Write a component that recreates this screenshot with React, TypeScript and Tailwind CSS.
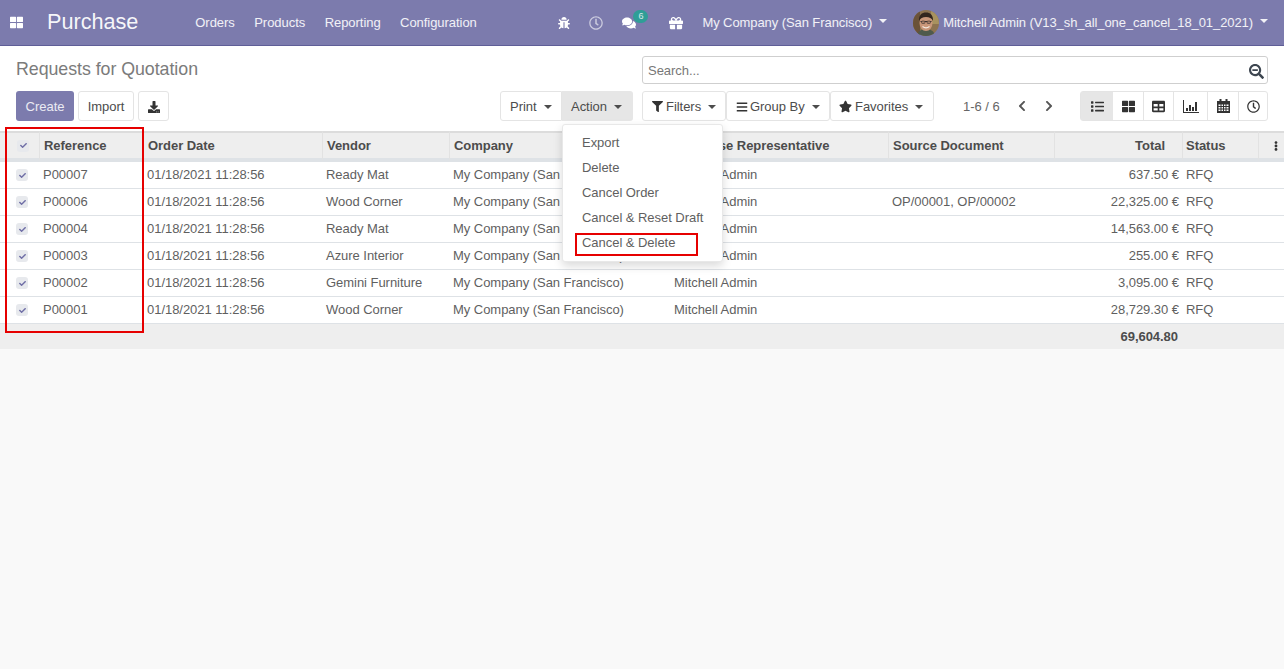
import React from "react";
import {
  FaBug,
  FaRegClock,
  FaComments,
  FaGift,
  FaFilter,
  FaBars,
  FaStar,
  FaList,
  FaTable,
  FaThLarge,
  FaDownload,
  FaSearchMinus,
  FaChevronLeft,
  FaChevronRight,
  FaEllipsisV,
  FaCheck,
} from "react-icons/fa";

const rows = [
  { ref: "P00007", vendor: "Ready Mat", source: "", total: "637.50 €" },
  { ref: "P00006", vendor: "Wood Corner", source: "OP/00001, OP/00002", total: "22,325.00 €" },
  { ref: "P00004", vendor: "Ready Mat", source: "", total: "14,563.00 €" },
  { ref: "P00003", vendor: "Azure Interior", source: "", total: "255.00 €" },
  { ref: "P00002", vendor: "Gemini Furniture", source: "", total: "3,095.00 €" },
  { ref: "P00001", vendor: "Wood Corner", source: "", total: "28,729.30 €" },
];

const Caret = () => (
  <span className="inline-block w-0 h-0 border-x-[4px] border-x-transparent border-t-[4px] border-t-current ml-[7px] align-[4px]" />
);

const Check = () => (
  <span className="ml-[13px] flex items-center justify-center w-3 h-3 rounded-[3px] bg-[#e7e9ed]">
    <FaCheck className="text-[7px] text-[#6f6ea6]" />
  </span>
);

const Avatar = () => (
  <svg width="26" height="26" viewBox="0 0 26 26" className="rounded-full">
    <rect width="26" height="26" fill="#8d7350" />
    <path d="M18 0h8v14h-8z" fill="#a8925f" />
    <path d="M0 0h7v26H0z" fill="#6a5238" />
    <path d="M4 26c1-5 4-7 9-7s8 2 9 7z" fill="#4f5a4c" />
    <ellipse cx="13" cy="13" rx="6.500" ry="8" fill="#c9977a" />
    <path d="M6 11c-.5-6 3-8.500 7-8.500s7.500 2.500 7 8.500c-1.500-3-3.500-4-7-4s-5.500 1-7 4z" fill="#33261e" />
    <path d="M7.500 11.500h11" stroke="#3a3330" strokeWidth="1" />
    <rect x="8.500" y="11" width="3.500" height="2.500" rx="1" fill="#a87f68" stroke="#3a3330" strokeWidth=".6" />
    <rect x="14" y="11" width="3.500" height="2.500" rx="1" fill="#a87f68" stroke="#3a3330" strokeWidth=".6" />
    <path d="M9.500 16.500c2 1.500 5 1.500 7 0" stroke="#f5ebe2" strokeWidth="1.300" fill="none" />
  </svg>
);

const ChartIcon = () => (
  <svg width="16" height="13" viewBox="0 0 16 13" fill="#333">
    <path d="M0 0h1v12h15v1H0z" />
    <path d="M3 8h2v3H3zM6 5h2v6H6zM9 7h2v4H9zM12 2h2v9h-2z" />
  </svg>
);

const CalendarIcon = () => (
  <svg width="13" height="14" viewBox="0 0 13 14" fill="#333">
    <path d="M0 2h2.500V0h2v2h4V0h2v2H13v12H0z" />
    <path
      d="M1.500 5.500h2v1.500h-2zM4.500 5.500h1.500v1.500H4.500zM7 5.500h1.500v1.500H7zM9.500 5.500h2v1.500h-2zM1.500 8h2v1.500h-2zM4.500 8h1.500v1.500H4.500zM7 8h1.500v1.500H7zM9.500 8h2v1.500h-2zM1.500 10.500h2V12h-2zM4.500 10.500h1.500V12H4.500zM7 10.500h1.500V12H7zM9.500 10.500h2V12h-2z"
      fill="#fff"
    />
  </svg>
);

const Navbar = () => (
  <div className="h-[46px] shrink-0 flex items-center bg-[#7c7bad] border-b border-[#5f5e97] text-[13px] text-white/90">
    <FaThLarge className="ml-[10px] text-[13px] text-white" />
    <span className="ml-[24px] text-[21.700px] text-white/95">Purchase</span>
    <div className="ml-[57px] flex gap-[19.500px] tracking-[-0.05px]">
      <span>Orders</span>
      <span>Products</span>
      <span>Reporting</span>
      <span>Configuration</span>
    </div>
    <div className="ml-auto flex items-center tracking-[-0.080px]">
      <FaBug className="text-[12px] text-white" />
      <FaRegClock className="ml-[19px] text-[14px] text-white/60" />
      <span className="relative ml-[19px]">
        <FaComments className="text-[14px] text-white" />
        <span className="absolute -top-[6px] left-[11px] w-[15px] h-[13px] rounded-full bg-[#2f9e97] text-[9px] leading-[13px] text-center text-white/80">
          6
        </span>
      </span>
      <FaGift className="ml-[33px] text-[14px] text-white" />
      <span className="ml-[19px]">
        My Company (San Francisco)
        <Caret />
      </span>
      <span className="ml-[26px]">
        <Avatar />
      </span>
      <span className="ml-[4px] mr-[16px]">
        Mitchell Admin (V13_sh_all_one_cancel_18_01_2021)
        <Caret />
      </span>
    </div>
  </div>
);

const btn =
  "h-[30px] pt-[1px] flex items-center bg-white border border-[#e4e4e4] text-[13px] text-[#4c4c4c]";

const ControlPanel = () => (
  <div className="h-[85px] shrink-0 bg-white px-4 pt-[10px] flex gap-[9px]">
    <div className="flex-1 flex flex-col">
      <div className="h-[35px] text-[17.800px] leading-[26px] text-[#7b7b7b]">
        Requests for Quotation
      </div>
      <div className="flex justify-between">
        <div className="flex gap-1">
          <div className="h-[30px] w-[58px] pt-[1px] rounded-[3px] bg-[#7c7bad] flex items-center justify-center text-[13px] text-white/85">
            Create
          </div>
          <div className={`${btn} w-[56px] justify-center rounded-[3px]`}>Import</div>
          <div className={`${btn} w-[31px] justify-center rounded-[3px]`}>
            <FaDownload className="text-[12px] text-[#333]" />
          </div>
        </div>
        <div className="flex">
          <div className={`${btn} w-[62px] pl-[9px] rounded-l-[3px]`}>
            Print
            <Caret />
          </div>
          <div className="h-[30px] w-[71px] pt-[1px] pl-[9px] flex items-center bg-[#e6e6e6] rounded-r-[3px] text-[13px] text-[#4c4c4c]">
            Action
            <Caret />
          </div>
        </div>
      </div>
    </div>
    <div className="w-[626px] flex flex-col">
      <div className="h-[28px] pt-[2px] flex items-center justify-between rounded-[3px] border border-[#cfcfcf] pl-[5px] pr-[3px] text-[13px] text-[#777]">
        <span>Search...</span>
        <FaSearchMinus className="text-[15px] text-[#3d4650]" />
      </div>
      <div className="mt-[7px] flex items-center">
        <div className="flex">
          <div className={`${btn} w-[84px] pl-[9px] rounded-[3px]`}>
            <FaFilter className="mr-[3px] text-[11px] text-[#333]" />
            Filters
            <Caret />
          </div>
          <div className={`${btn} w-[104px] pl-[9px] rounded-[3px]`}>
            <FaBars className="mr-[2px] text-[12px] text-[#333]" />
            Group By
            <Caret />
          </div>
          <div className={`${btn} w-[104px] pl-[8px] rounded-[3px]`}>
            <FaStar className="mr-[3px] text-[13px] text-[#333]" />
            Favorites
            <Caret />
          </div>
        </div>
        <span className="ml-[29px] pt-[1px] text-[13px] text-[#666]">1-6 / 6</span>
        <FaChevronLeft className="ml-[16px] text-[12px] text-[#555]" />
        <FaChevronRight className="ml-[15px] text-[12px] text-[#555]" />
        <div className="ml-auto flex w-[188px] h-[30px] rounded-[3px] border border-[#e4e4e4] text-[#333]">
          <div className="w-[32px] flex items-center justify-center bg-[#e6e6e6]">
            <FaList className="text-[13px]" />
          </div>
          <div className="w-[31px] flex items-center justify-center border-r border-[#e4e4e4]">
            <FaThLarge className="text-[13px]" />
          </div>
          <div className="w-[30px] flex items-center justify-center border-r border-[#e4e4e4]">
            <FaTable className="text-[13px]" />
          </div>
          <div className="w-[34px] flex items-center justify-center border-r border-[#e4e4e4]">
            <ChartIcon />
          </div>
          <div className="w-[31px] flex items-center justify-center border-r border-[#e4e4e4]">
            <CalendarIcon />
          </div>
          <div className="flex-1 flex items-center justify-center">
            <FaRegClock className="text-[13px]" />
          </div>
        </div>
      </div>
    </div>
  </div>
);

const th =
  "h-[31px] p-0 pl-[4px] font-bold text-left bg-[#eeeeee] border-t-2 border-b-[4px] border-r border-t-[#dcdcdc] border-b-[#dee2e6] border-r-[#e2e2e2]";
const td = "h-[27px] p-0 pl-[3px] font-normal bg-white border-b border-[#dee2e6]";

const Table = () => (
  <table className="w-full table-fixed border-separate border-spacing-0 text-[13px] text-[#5f5f5f]">
    <colgroup>
      <col className="w-[40px]" />
      <col className="w-[104px]" />
      <col className="w-[179px]" />
      <col className="w-[127px]" />
      <col className="w-[221px]" />
      <col className="w-[218px]" />
      <col className="w-[166px]" />
      <col className="w-[128px]" />
      <col className="w-[76px]" />
      <col className="w-[25px]" />
    </colgroup>
    <thead className="text-[#4c4c4c]">
      <tr>
        <th className={th}>
          <Check />
        </th>
        <th className={th}>Reference</th>
        <th className={th}>Order Date</th>
        <th className={th}>Vendor</th>
        <th className={th}>Company</th>
        <th className={th}>Purchase Representative</th>
        <th className={th}>Source Document</th>
        <th className={`${th} text-right pr-[17px]`}>Total</th>
        <th className={`${th} !pl-[3px]`}>Status</th>
        <th className="h-[31px] p-0 pr-[3px] bg-[#eeeeee] border-t-2 border-b-[4px] border-t-[#dcdcdc] border-b-[#dee2e6]">
          <FaEllipsisV className="ml-auto text-[10px] text-[#333]" />
        </th>
      </tr>
    </thead>
    <tbody>
      {rows.map((r) => (
        <tr key={r.ref}>
          <td className={td}>
            <Check />
          </td>
          <td className={td}>{r.ref}</td>
          <td className={td}>01/18/2021 11:28:56</td>
          <td className={td}>{r.vendor}</td>
          <td className={td}>My Company (San Francisco)</td>
          <td className={td}>Mitchell Admin</td>
          <td className={td}>{r.source}</td>
          <td className={`${td} text-right pr-[4px]`}>{r.total}</td>
          <td className={td}>RFQ</td>
          <td className={td} />
        </tr>
      ))}
    </tbody>
    <tfoot>
      <tr className="bg-[#eeeeee]">
        <td className="h-[25px] p-0" colSpan={7} />
        <td className="h-[25px] p-0 pr-[5px] text-right font-bold text-[#4c4c4c]">69,604.80</td>
        <td className="h-[25px] p-0" colSpan={2} />
      </tr>
    </tfoot>
  </table>
);

const ActionMenu = () => (
  <div className="absolute left-[562px] top-[124px] w-[161px] h-[138px] bg-white rounded-[3px] border border-[#e8e8e8] shadow-[0_4px_10px_rgba(0,0,0,0.15)] pt-[5px] text-[13px] text-[#5f5f5f]">
    {["Export", "Delete", "Cancel Order", "Cancel & Reset Draft", "Cancel & Delete"].map((item) => (
      <div key={item} className="h-[25px] leading-[25px] pl-[19px]">
        {item}
      </div>
    ))}
  </div>
);

export default function App() {
  return (
    <div className="relative h-[669px] flex flex-col bg-[#f9f9f9] overflow-hidden tracking-[-0.04px] font-['Liberation_Sans',Arial,sans-serif]">
      <Navbar />
      <ControlPanel />
      <Table />
      <ActionMenu />
      <div className="absolute left-[5px] top-[127px] w-[139px] h-[206px] border-2 border-[#e60000]" />
      <div className="absolute left-[575px] top-[233px] w-[123px] h-[23px] border-2 border-[#e60000]" />
    </div>
  );
}
